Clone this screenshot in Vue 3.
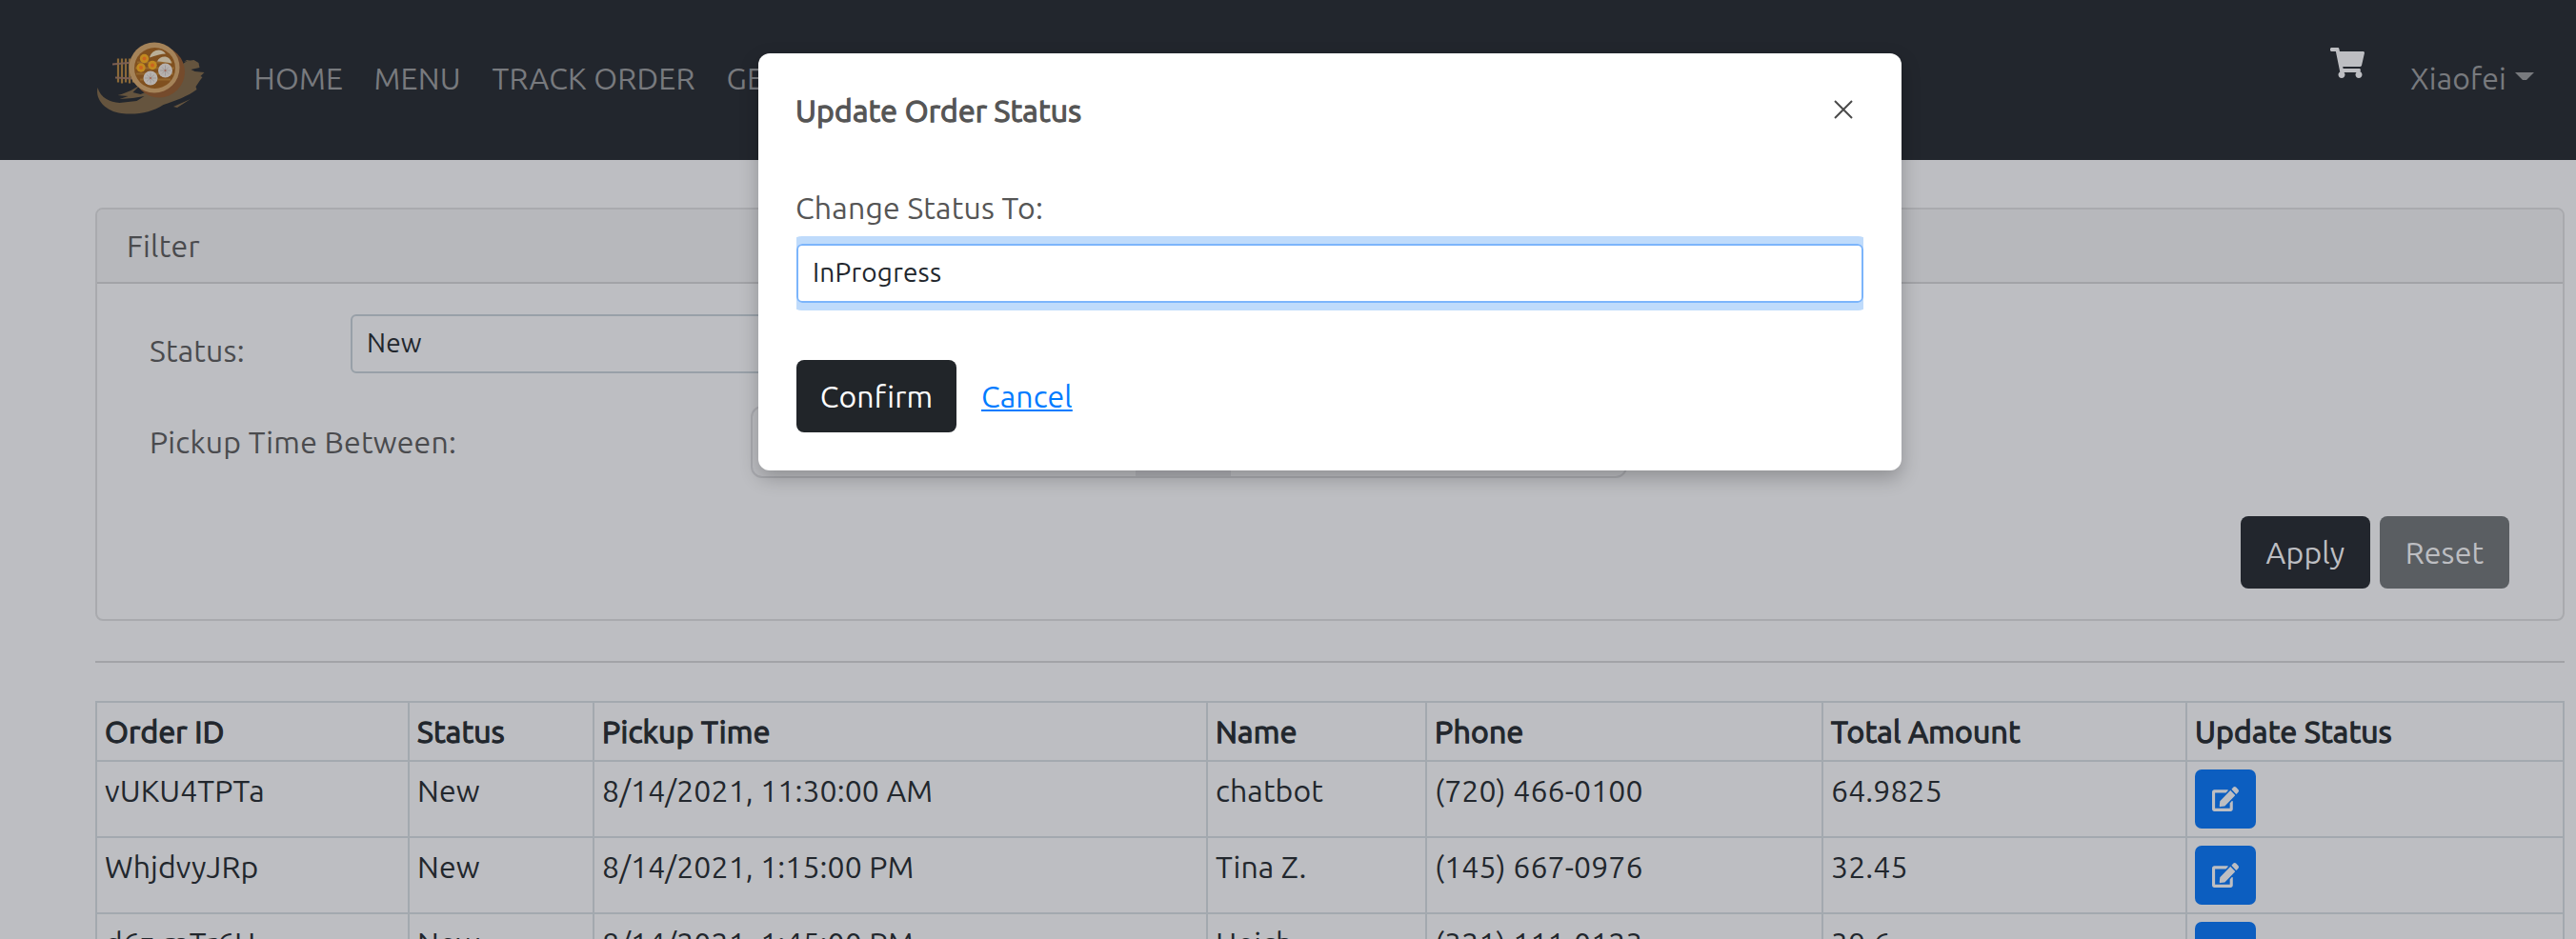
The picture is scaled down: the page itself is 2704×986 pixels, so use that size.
<template>
  <div class="page">
    <header class="navbar">
      <svg class="logo" viewBox="0 0 120 84" width="120" height="84">
        <g fill="#65543e">
          <path d="M3 31C0 44 12 56 28 58C44 60 60 57 72 49C84 45 98 40 107 33L106 30L110 24L113 20L111 19L115 15L105 14L101 12L110 10L109 5L104 2L97 3L88 9L84 20L66 31L48 38L40 36L48 28L38 34L28 38L24 39L35 40L26 43L40 42L52 40L44 45L26 47C16 46 6 42 3 31Z" transform="translate(-2.500,-1)" />
          <path d="M94 1L91 3L98 1ZM80 50L98 42L84 51Z" />
        </g>
        <g transform="translate(-2,-.5)">
          <g stroke="#8b6938" stroke-width="2.2"><path d="M24 0V25M28 0V26M32 0V25M36 0V26M40 0V25" /></g>
          <path d="M18 6L40 4M21 20L40 21" stroke="#7b5f52" stroke-width="2" />
          <circle cx="67" cy="14" r="27" fill="#754b2c" />
          <circle cx="62" cy="9.500" r="26.500" fill="#a58359" />
          <circle cx="62.500" cy="10" r="21.500" fill="#80501f" />
          <path d="M44 4H81M42 10H83M43 16H82M47 22H79" stroke="#94672e" stroke-width="2" />
          <g fill="#c0891f"><circle cx="51.500" cy="0" r="4.700" /><circle cx="48" cy="9.500" r="4.700" /><circle cx="60" cy="7" r="4.700" /></g>
          <g fill="#cb6420"><circle cx="51.500" cy="0" r="2" /><circle cx="48" cy="9.500" r="2" /><circle cx="60" cy="7" r="2" /></g>
          <g fill="#b9ae97"><path d="M57 -1C59 -9 69 -12 74 -5C69 -5 63 -3 57 -1Z" /><path d="M65 3C68 -4 79 -4 80 5C75 4 70 3 65 3Z" /></g>
          <g fill="#b6b1ae"><circle cx="73.500" cy="12.500" r="7.500" /><circle cx="58" cy="20.500" r="7.500" /></g>
          <g stroke="#969291" stroke-width=".7"><path d="M68 12.500H79M73.500 7V18M70 9L77 16M77 9L70 16M52 20.500H64M58 15V26M54 17L62 24M62 17L54 24" /></g>
          <circle cx="73.500" cy="12.500" r="1" fill="#a76555" /><circle cx="58" cy="20.500" r="1" fill="#a76555" />
        </g>
      </svg>
      <nav class="links">
        <a class="home">HOME</a><a class="menu">MENU</a><a class="track">TRACK ORDER</a><a class="get">GE</a>
      </nav>
      <svg class="cart" viewBox="0 0 576 512" width="36" height="32"><path fill="#bdbec2" d="M528.120 301.319l47.273-208C578.806 78.301 567.391 64 551.990 64H159.208l-9.166-44.810C147.758 8.021 137.930 0 126.529 0H24C10.745 0 0 10.745 0 24v16c0 13.255 10.745 24 24 24h69.883l70.248 343.435C147.325 417.100 136 435.222 136 456c0 30.928 25.072 56 56 56s56-25.072 56-56c0-15.674-6.447-29.835-16.824-40h209.647C430.447 426.165 424 440.326 424 456c0 30.928 25.072 56 56 56s56-25.072 56-56c0-22.172-12.888-41.332-31.579-50.405l5.517-24.276c3.413-15.018-8.002-29.319-23.403-29.319H218.117l-6.545-32h293.145c11.206 0 20.920-7.754 23.403-18.681z" /></svg>
      <a class="user">Xiaofei</a>
      <svg class="caret" viewBox="0 0 20 8" width="20" height="8"><path fill="#787a7e" d="M0 0H20L12 8H8Z" /></svg>
    </header>

    <main class="content">
      <section class="card">
        <div class="card-head">Filter</div>
        <div class="card-body">
          <div class="row status-row">
            <label>Status:</label>
            <div class="select">New</div>
          </div>
          <div class="row time-row">
            <label>Pickup Time Between:</label>
            <div class="range"><i></i><b></b></div>
          </div>
          <div class="actions">
            <button class="btn dark">Apply</button>
            <button class="btn gray">Reset</button>
          </div>
        </div>
      </section>
      <hr />
      <table>
        <colgroup><col v-for="(w, i) in widths" :key="i" :style="{ width: w + 'px' }" /></colgroup>
        <thead>
          <tr><th v-for="h in heads" :key="h">{{ h }}</th></tr>
        </thead>
        <tbody>
          <tr v-for="(r, i) in rows" :key="i">
            <td v-for="(c, j) in r" :key="j">{{ c }}</td>
            <td>
              <button class="edit"><svg viewBox="0 0 576 512" width="28" height="26" preserveAspectRatio="none"><path fill="#bdbec2" d="M402.600 83.200l90.200 90.200c3.800 3.800 3.800 10 0 13.800L274.400 405.600l-92.800 10.300c-12.400 1.400-22.900-9.100-21.500-21.500l10.300-92.800L388.800 83.200c3.800-3.800 10-3.800 13.800 0zm162-22.900l-48.800-48.800c-15.200-15.200-39.900-15.200-55.200 0l-35.400 35.400c-3.800 3.800-3.800 10 0 13.800l90.200 90.200c3.800 3.800 10 3.800 13.800 0l35.400-35.400c15.200-15.300 15.200-40 0-55.200zM384 346.200V448H64V128h229.800c3.200 0 6.200-1.300 8.500-3.500l40-40c7.600-7.600 2.200-20.500-8.500-20.500H48C21.500 64 0 85.500 0 112v352c0 26.500 21.500 48 48 48h352c26.500 0 48-21.500 48-48V306.200c0-10.700-12.900-16-20.500-8.500l-40 40c-2.200 2.300-3.500 5.300-3.500 8.500z" /></svg></button>
            </td>
          </tr>
        </tbody>
      </table>
    </main>

    <div class="modal" role="dialog">
      <div class="modal-head">
        <h2>Update Order Status</h2>
        <svg class="close" viewBox="0 0 20 20" width="20" height="20"><path d="M1 1L19 19M19 1L1 19" stroke="#4a4a4a" stroke-width="2" /></svg>
      </div>
      <label>Change Status To:</label>
      <div class="clip"><div class="select focus">InProgress</div></div>
      <div class="modal-actions">
        <button class="btn confirm">Confirm</button>
        <a class="cancel">Cancel</a>
      </div>
    </div>
  </div>
</template>

<script setup>
const widths = [328, 194, 644, 230, 416, 382, 396]

const heads = ['Order ID', 'Status', 'Pickup Time', 'Name', 'Phone', 'Total Amount', 'Update Status']

const rows = [
  ['vUKU4TPTa', 'New', '8/14/2021, 11:30:00 AM', 'chatbot', '(720) 466-0100', '64.9825'],
  ['WhjdvyJRp', 'New', '8/14/2021, 1:15:00 PM', 'Tina Z.', '(145) 667-0976', '32.45'],
  ['d6z-mTr6H', 'New', '8/14/2021, 1:45:00 PM', 'Heich', '(321) 111-0123', '39.6'],
]
</script>

<style>
html, body { margin: 0; overflow: hidden; }
</style>

<style scoped>
* { box-sizing: border-box; }
.page {
  position: relative; width: 2704px; height: 986px; overflow: hidden;
  background: #bdbec2; color: #22272d;
  font-family: Ubuntu, "Noto Sans", sans-serif; font-size: 32px; line-height: 48px; letter-spacing: .1px;
}
a, label, h2, th, td { white-space: nowrap; }
.navbar { height: 168px; background: #22262d; color: #787a7e; display: flex; align-items: flex-start; }
.logo { margin: 62px 0 0 102px; flex: none; overflow: visible; }
.links { display: flex; margin: 58px 0 0 44.5px; }
.links a { display: block; flex: none; letter-spacing: .2px; }
.home { width: 126px; }
.menu { width: 124px; }
.track { width: 246px; }
.get { width: 300px; }
.cart { margin: 50px 0 0 1383.5px; flex: none; }
.user { margin: 58px 0 0 48px; width: 110px; flex: none; }
.caret { margin-top: 76px; flex: none; }
.content { padding: 50px 12px 0 100px; }
.card { height: 434px; border: 2px solid #a9aaae; border-radius: 8px; overflow: hidden; color: #4a4b4e; }
.card-head { height: 78px; padding: 14px 31px; background: #b7b8bc; border-bottom: 2px solid #a2a3a7; letter-spacing: .25px; }
.card-body { padding: 32px 56px 0 55px; }
.row { display: flex; }
.status-row { height: 96px; }
.status-row label { width: 211px; padding-top: 14px; letter-spacing: .2px; }
.time-row { height: 116px; }
.time-row label { width: 631px; padding-top: 14px; letter-spacing: .2px; }
.select { width: 600px; height: 62px; border: 2px solid #98a0a8; border-radius: 6px; padding: 3.5px 15px; font-size: 28px; letter-spacing: .2px; color: #22272d; }
.range { width: 920px; height: 76px; border: 2px solid #a9aaaf; border-radius: 12px; display: flex; overflow: hidden; }
.range i { flex: none; width: 402px; }
.range b { width: 100px; background: #b0b1b6; }
.actions { display: flex; justify-content: flex-end; gap: 10px; }
.btn { height: 76px; border: 0; border-radius: 8px; font: inherit; letter-spacing: .15px; padding: 0; color: #bdbec2; text-align: center; }
.dark { width: 136px; background: #22262d; }
.gray { width: 136px; background: #5a5e62; }
hr { margin: 42px 0 40px; border: 0; height: 2px; background: #a2a3a7; }
table { width: 2592px; table-layout: fixed; border-collapse: separate; border-spacing: 0; border-left: 2px solid #a3a9af; border-top: 2px solid #a3a9af; line-height: 44px; }
th, td { padding: 8px 0 0 8px; height: 80px; vertical-align: top; text-align: left; border-right: 2px solid #a3a9af; border-bottom: 2px solid #a3a9af; font-weight: 400; }
th { height: 62px; -webkit-text-stroke: 1.3px #22272d; letter-spacing: .25px; }
.edit { display: flex; width: 64px; height: 62px; border: 0; border-radius: 7px; background: #0c5ec0; align-items: center; justify-content: center; }
.modal {
  position: absolute; left: 796px; top: 56px; width: 1200px; height: 438px; padding: 36px 40px 0;
  border-radius: 12px; background: #fff; color: #555;
  box-shadow: 0 8px 20px rgba(0, 0, 0, .24);
}
.modal-head { display: flex; justify-content: space-between; height: 102px; }
h2 { margin: 0 0 0 -1px; font-size: 32px; font-weight: 400; -webkit-text-stroke: 1.3px #555; letter-spacing: .2px; }
.close { margin: 13px 11px 0 0; }
.modal label { display: block; height: 54px; margin-left: -1px; letter-spacing: .2px; }
.clip { overflow: hidden; padding: 8px 0; height: 78px; }
.focus { width: 100%; border-color: #7cb5fb; box-shadow: 0 0 0 8px #bfdbfb; }
.modal-actions { display: flex; margin-top: 52px; gap: 26px; align-items: center; }
.confirm { width: 168px; background: #212529; color: #fff; }
.cancel { color: #007bff; text-decoration: underline; text-decoration-thickness: 2px; text-underline-offset: 2px; }
</style>
